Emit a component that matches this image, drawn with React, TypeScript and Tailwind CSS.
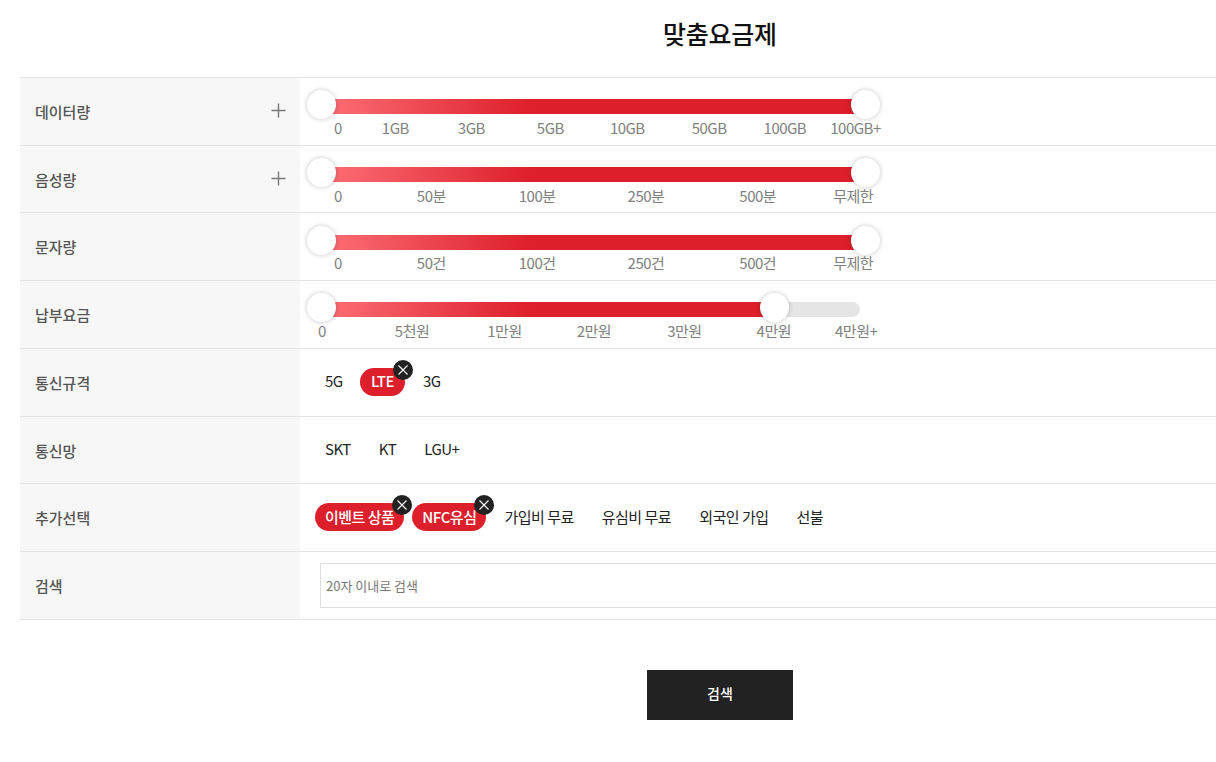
const font = "font-['Noto_Sans_CJK_KR','Noto_Sans',sans-serif]";

function Thumb({ className }: { className: string }) {
  return (
    <span className={"absolute top-[-9px] h-[29px] w-[29px] rounded-full bg-white shadow-[0_0_4px_1px_rgba(0,0,0,0.16)] " + className} />
  );
}

function Plus() {
  return (
    <svg width="15" height="15" viewBox="0 0 15 15" className="absolute right-[14px] top-[25px]" fill="none" stroke="#777" strokeWidth="1.4">
      <path d="M7.5 0.5V14.5M0.5 7.5H14.5" />
    </svg>
  );
}

function Row({ label, plus, children }: { label: string; plus?: boolean; children: React.ReactNode }) {
  return (
    <div className="flex h-[67.75px] border-b border-[#e3e3e3]">
      <div className="relative flex w-[280px] shrink-0 items-center bg-[#f7f7f7] pt-[2px] pl-[15px] text-[15px] font-medium text-[#555]">
        {label}
        {plus && <Plus />}
      </div>
      <div className="min-w-0 flex-1">{children}</div>
    </div>
  );
}

function Slider({ labels, partial }: { labels: [string, string][]; partial?: boolean }) {
  return (
    <div className="pt-[21.25px]">
      {partial ? (
        <div className="relative ml-[21px] h-[15px] w-[539px] rounded-r-full bg-[#e5e5e5]">
          <div className="h-full w-[454px] bg-[linear-gradient(90deg,#fb6a72_14px,#dd1f2b_210px)]" />
          <Thumb className="left-[-14px]" />
          <Thumb className="left-[439px]" />
        </div>
      ) : (
        <div className="relative ml-[21px] h-[15px] w-[545px] bg-[linear-gradient(90deg,#fb6a72_14px,#dd1f2b_210px)]">
          <Thumb className="left-[-14px]" />
          <Thumb className="left-[530px]" />
        </div>
      )}
      <div className="mt-[3.75px] flex text-[15px] leading-[20px] tracking-[-0.5px] whitespace-nowrap text-[#808080]">
        {labels.map(([t, c]) => (
          <span key={t} className={c}>{t}</span>
        ))}
      </div>
    </div>
  );
}

function Chip({ text, on, className = "" }: { text: string; on?: boolean; className?: string }) {
  return on ? (
    <span className={"relative flex h-[28px] items-center justify-center rounded-full bg-[#dd1f2b] px-[10px] text-[15px] font-medium tracking-[-0.5px] whitespace-nowrap text-white " + className}>
      {text}
      <span className="absolute right-[-8px] top-[-8px] flex h-[20px] w-[20px] items-center justify-center rounded-full bg-[#222]">
        <svg width="10" height="10" viewBox="0 0 10 10" fill="none" stroke="#fff" strokeWidth="1.1">
          <path d="M0.5 0.5L9.5 9.5M9.5 0.5L0.5 9.5" />
        </svg>
      </span>
    </span>
  ) : (
    <span className={"flex h-[28px] items-center px-[10px] text-[15px] tracking-[-0.5px] whitespace-nowrap text-[#222] " + className}>{text}</span>
  );
}

function Chips({ children }: { children: React.ReactNode }) {
  return <div className="flex h-full items-center gap-[8px] pl-[15px] pb-[1px]">{children}</div>;
}

export default function App() {
  return (
    <div className={"h-[762px] w-[1216px] overflow-hidden bg-white " + font}>
      <div className="ml-[20px] w-[1400px]">
        <h1 className="flex h-[76.8px] items-center justify-center pb-[10px] text-[25px] font-medium tracking-[-0.25px] text-[#111]">맞춤요금제</h1>
        <div className="border-t border-[#e3e3e3]">
          <Row label="데이터량" plus>
            <Slider labels={[["0","ml-[34px]"],["1GB","ml-[40px]"],["3GB","ml-[49px]"],["5GB","ml-[52px]"],["10GB","ml-[46px]"],["50GB","ml-[47px]"],["100GB","ml-[37px]"],["100GB+","ml-[24px]"]]} />
          </Row>
          <Row label="음성량" plus>
            <Slider labels={[["0","ml-[34px]"],["50분","ml-[75px]"],["100분","ml-[73px]"],["250분","ml-[72px]"],["500분","ml-[75px]"],["무제한","ml-[57px]"]]} />
          </Row>
          <Row label="문자량">
            <Slider labels={[["0","ml-[34px]"],["50건","ml-[75px]"],["100건","ml-[73px]"],["250건","ml-[72px]"],["500건","ml-[75px]"],["무제한","ml-[57px]"]]} />
          </Row>
          <Row label="납부요금">
            <Slider partial labels={[["0","ml-[18px]"],["5천원","ml-[69px]"],["1만원","ml-[58px]"],["2만원","ml-[55px]"],["3만원","ml-[56px]"],["4만원","ml-[55px]"],["4만원+","ml-[44px]"]]} />
          </Row>
          <Row label="통신규격">
            <Chips><Chip text="5G" className="w-[37px]" /><Chip text="LTE" on className="w-[45px]" /><Chip text="3G" /></Chips>
          </Row>
          <Row label="통신망">
            <Chips><Chip text="SKT" /><Chip text="KT" /><Chip text="LGU+" /></Chips>
          </Row>
          <Row label="추가선택">
            <Chips>
              <Chip text="이벤트 상품" on /><Chip text="NFC유심" on className="w-[74px]" /><Chip text="가입비 무료" /><Chip text="유심비 무료" /><Chip text="외국인 가입" /><Chip text="선불" />
            </Chips>
          </Row>
          <Row label="검색">
            <div className="flex h-full items-center pl-[20px]">
              <input placeholder="20자 이내로 검색" className="h-[45px] w-full border border-[#ddd] pl-[5px] text-[13px] outline-none placeholder:text-[#777]" />
            </div>
          </Row>
        </div>
        <div className="mt-[50.2px] flex justify-center">
          <button className="h-[50px] w-[146px] bg-[#222] pb-[2px] text-[14px] font-medium text-white">검색</button>
        </div>
      </div>
    </div>
  );
}
